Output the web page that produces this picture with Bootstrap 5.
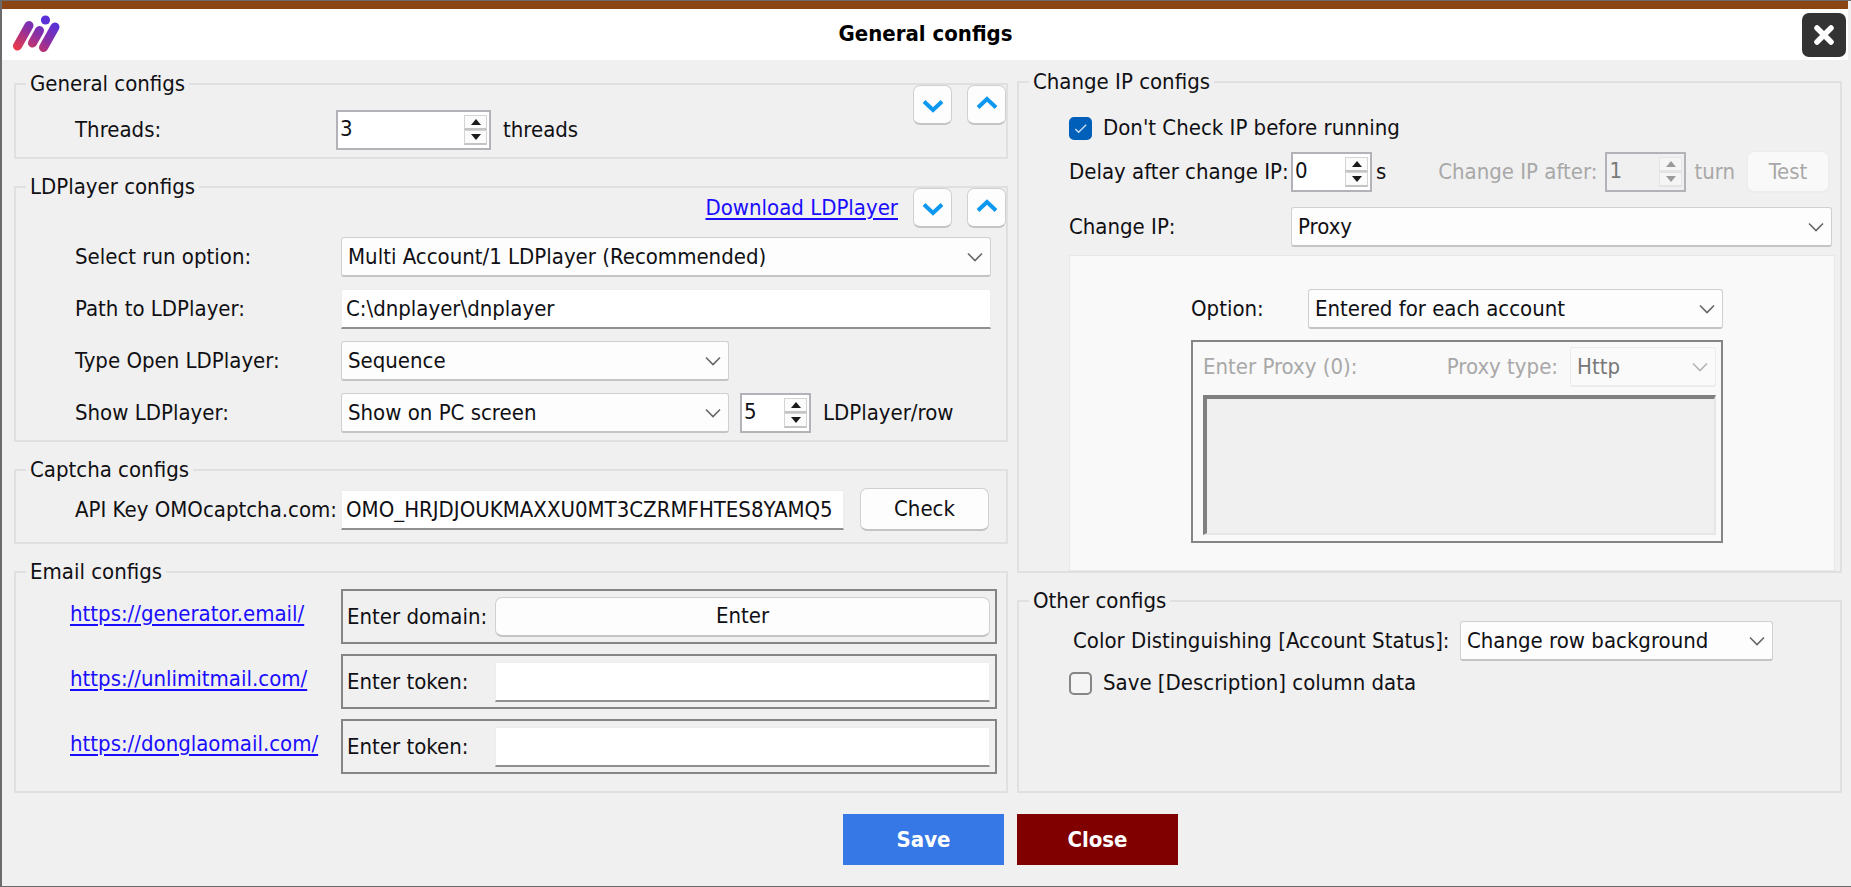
<!DOCTYPE html>
<html lang="en">
<head>
<meta charset="utf-8">
<meta name="viewport" content="width=device-width, initial-scale=1">
<title>General configs</title>
<link href="https://cdn.jsdelivr.net/npm/bootstrap@5.3.0/dist/css/bootstrap.min.css" rel="stylesheet">
<style>
  body {
    background: #f0f0f0;
    color: #101014;
    font-family: "DejaVu Sans Condensed", "DejaVu Sans", sans-serif;
    font-size: 22px;
    line-height: 26px;
  }
  .window-frame { border: solid #6b6b6b; border-width: 1px 0 1px 2px; min-height: 100vh; padding-right: 3px; }
  .title-bar { border-top: 8px solid #8b4513; background: #fff; height: 59px; padding: 0 2px 0 10px; }
  .title-bar h1 { font-size: 22px; line-height: 26px; color: #000; padding-bottom: 2px; }
  .title-logo { width: 60px; }
  .title-close { width: 67px; }
  .close-btn { width: 44px; height: 44px; background: #333; border: 0; border-radius: 7px; }
  .config-grid { display: grid; grid-template-columns: 994fr 825fr; column-gap: 9px; padding: 9px 6px 0 12px; }
  .col-stack { gap: 15px; }
  .col-left { padding-top: 2px; }
  fieldset.group { border: 2px solid #e0e0e0; padding: 0 11px 7px 59px; }
  .group > legend { float: none; width: auto; margin: 0 0 0 -49px; padding: 0 4px; font-size: 22px; line-height: 26px; }
  fieldset.group-right { padding-left: 50px; }
  .group-right > legend { margin-left: -40px; }
  .group a, .group a:hover { color: #1a0dff; text-decoration: underline; text-decoration-thickness: 2px; text-underline-offset: 3px; }
  .head-row { gap: 15px; margin: -12px -11px 0 0; }
  .ld-head { margin-bottom: 9px; }
  .threads-row { padding-top: 13px; }
  .sq-btn { width: 39px; height: 40px; }
  .face { background: #fdfdfd; border: 1px solid #d0d0d0; border-bottom: 2px solid #c4c4c4; border-radius: 7px; color: #101014; padding: 0; }
  .face:hover { background: #f4f8fc; }
  .face:disabled { border-color: #ececec; background: #f9f9f9; color: #a8a8a8; opacity: 1; }
  .form-lines { display: grid; grid-template-columns: 266px 1fr; row-gap: 12px; align-items: center; }
  .pick {
    height: 40px; padding: 0 36px 0 6px; font-size: 22px; line-height: 26px; color: #101014;
    background: #fdfdfd url("data:image/svg+xml,%3Csvg xmlns='http://www.w3.org/2000/svg' viewBox='0 0 16 10'%3E%3Cpath d='M1 1.5l7 7 7-7' fill='none' stroke='%23666' stroke-width='1.6'/%3E%3C/svg%3E") no-repeat right 7px center / 16px 10px;
    border: 1px solid #d0d0d0; border-bottom: 2px solid #c4c4c4; border-radius: 3px;
  }
  .pick:disabled { background-color: #fafafa; border-color: #ebebeb; color: #777; opacity: 1;
    background-image: url("data:image/svg+xml,%3Csvg xmlns='http://www.w3.org/2000/svg' viewBox='0 0 16 10'%3E%3Cpath d='M1 1.5l7 7 7-7' fill='none' stroke='%23b5b5b5' stroke-width='1.6'/%3E%3C/svg%3E"); }
  .pick-mid { width: 388px; }
  .line-input { height: 40px; padding: 0 4px; font-size: 22px; line-height: 26px; color: #101014; border: 1px solid #ededed; border-bottom: 2px solid #909090; border-radius: 0; background: #fff; }
  .spin { height: 40px; border: 2px solid #b2b2b8; background: #fff; padding: 2px; }
  .spin input { min-width: 0; border: 0; padding: 0 0 2px; background: transparent; color: #101014; appearance: textfield; -moz-appearance: textfield; }
  .spin input::-webkit-inner-spin-button { appearance: none; }
  .spin button { width: 23px; height: 15px; padding: 0; border: 1px solid #d4d4d4; border-bottom: 2px solid #c4c4c4; background: #fbfbfb; display: flex; align-items: center; justify-content: center; }
  .spin svg { fill: #1a1a1a; }
  .spin.off { background: #f0f0f0; }
  .spin.off input { color: #777; }
  .spin.off button { border-color: #e4e4e4; background: #f5f5f5; }
  .spin.off svg { fill: #9a9a9a; }
  .spin-wide { width: 155px; }
  .spin-mid { width: 81px; }
  .spin-small { width: 71px; margin-left: 11px; }
  .dim { color: #a8a8a8; }
  .framed { border: 2px solid #858585; }
  .key-row { padding: 5px 6px 4px 0; }
  .key-row label { width: 266px; }
  .check-btn { width: 129px; height: 43px; }
  .mail-row { height: 55px; padding: 0 5px 0 4px; }
  .mail-grid { display: grid; grid-template-columns: 271px 1fr; row-gap: 10px; align-items: center; margin: 4px -2px 10px -5px; }
  .mail-grid > a { padding-bottom: 5px; }
  .mail-label { width: 148px; }
  .enter-btn { height: 40px; }
  .tick { width: 23px; height: 23px; margin: 0; border: 2px solid #868686; border-radius: 5px !important; background-color: #f5f5f5; }
  .tick + label { margin-left: 11px; }
  .tick:checked { background-color: #005fb8; border-color: #005fb8; background-image: url("data:image/svg+xml,%3Csvg xmlns='http://www.w3.org/2000/svg' viewBox='0 0 20 20'%3E%3Cpath d='M4.500 10.500l3.500 3.500 8-8' fill='none' stroke='%23c8dcf0' stroke-width='1.500'/%3E%3C/svg%3E"); }
  .ip-label { width: 222px; }
  .delay-row { margin-top: 10px; }
  .test-btn { width: 82px; height: 42px; margin-left: 12px; }
  .change-row { margin: 14px -3px 0 0; }
  .proxy-panel { background: #f9f9f9; border: 1px solid #e8e8e8; margin: 8px -6px -7px 0; padding: 33px 111px 27px 121px; }
  .option-label { width: 117px; }
  .proxy-box { margin-top: 11px; padding: 5px 5px 6px 10px; }
  .proxy-type { width: 146px; margin-left: 12px; }
  .proxy-text { height: 140px; resize: none; background: #f0f0f0; border: solid; border-width: 4px 2px 2px 4px; border-color: #808080 #e6e6e6 #e6e6e6 #808080; border-radius: 0; }
  .color-row { margin-top: 7px; }
  .color-label { width: 387px; }
  .color-pick { width: 313px; }
  .save-row { margin-top: 9px; }
  .actions { gap: 13px; margin-top: 21px; padding-left: 171px; }
  .action { width: 161px; height: 51px; border: 0; border-radius: 0; color: #fff; font-size: 22px; font-weight: bold; }
  .action-save { background: #3678e6; }
  .action-close { background: #800000; }
</style>
</head>
<body>
<div class="window-frame">
  <header class="title-bar d-flex align-items-center">
    <div class="title-logo">
      <svg width="50" height="40" viewBox="0 0 50 40" class="d-block" role="img" aria-label="Logo">
        <defs>
          <linearGradient id="lg" gradientUnits="userSpaceOnUse" x1="12" y1="40" x2="34" y2="4">
            <stop offset="0" stop-color="#ef3a45"/><stop offset=".55" stop-color="#8e2fa0"/><stop offset="1" stop-color="#5a31d6"/>
          </linearGradient>
        </defs>
        <g stroke="url(#lg)" stroke-width="9" stroke-linecap="round">
          <path d="M5.500 31L17 10.500"/><path d="M20.500 28L27.500 15.500"/><path d="M31.500 32.500L43 12"/>
        </g>
        <circle cx="33.500" cy="5" r="4.600" fill="#5a31d6"/>
      </svg>
    </div>
    <h1 class="flex-grow-1 text-center fw-bold m-0">General configs</h1>
    <div class="title-close d-flex justify-content-end">
      <button type="button" class="close-btn d-flex align-items-center justify-content-center p-0" aria-label="Close window">
        <svg width="22" height="22" viewBox="0 0 22 22"><path d="M4 4l14 14M18 4L4 18" stroke="#fff" stroke-width="5.500" stroke-linecap="round"/></svg>
      </button>
    </div>
  </header>

  <main>
    <form>
      <div class="config-grid">
        <div class="col-stack col-left d-flex flex-column">
          <fieldset class="group">
            <legend>General configs</legend>
            <div class="d-flex align-items-start">
              <div class="threads-row d-flex align-items-center">
                <label for="threads" style="width:261px">Threads:</label>
                <div class="spin spin-wide d-flex align-items-center">
                  <input type="number" id="threads" class="flex-grow-1 w-100" value="3">
                  <div><button type="button" aria-label="More threads"><svg width="10" height="6"><path d="M0 6L5 0l5 6z"/></svg></button><button type="button" aria-label="Fewer threads"><svg width="10" height="6"><path d="M0 0h10L5 6z"/></svg></button></div>
                </div>
                <span class="ms-2 ps-1">threads</span>
              </div>
              <div class="head-row d-flex ms-auto">
                <button type="button" class="face sq-btn" aria-label="Move down"><svg width="22" height="14" viewBox="0 0 22 14"><path d="M2 2.500l9 8.500 9-8.500" fill="none" stroke="#0c98ee" stroke-width="4"/></svg></button>
                <button type="button" class="face sq-btn" aria-label="Move up"><svg width="22" height="20" viewBox="0 0 22 20"><path d="M2 11.500L11 3l9 8.500" fill="none" stroke="#0c98ee" stroke-width="4"/></svg></button>
              </div>
            </div>
          </fieldset>

          <fieldset class="group">
            <legend>LDPlayer configs</legend>
            <div class="head-row ld-head d-flex justify-content-end align-items-center">
              <a href="#ldplayer">Download LDPlayer</a>
              <button type="button" class="face sq-btn" aria-label="Move down"><svg width="22" height="14" viewBox="0 0 22 14"><path d="M2 2.500l9 8.500 9-8.500" fill="none" stroke="#0c98ee" stroke-width="4"/></svg></button>
              <button type="button" class="face sq-btn" aria-label="Move up"><svg width="22" height="20" viewBox="0 0 22 20"><path d="M2 11.500L11 3l9 8.500" fill="none" stroke="#0c98ee" stroke-width="4"/></svg></button>
            </div>
            <div class="form-lines pe-1">
              <label for="runopt">Select run option:</label>
              <select id="runopt" class="form-select pick"><option>Multi Account/1 LDPlayer (Recommended)</option></select>
              <label for="path">Path to LDPlayer:</label>
              <input type="text" id="path" class="form-control line-input" value="C:\dnplayer\dnplayer">
              <label for="opentype">Type Open LDPlayer:</label>
              <select id="opentype" class="form-select pick pick-mid"><option>Sequence</option></select>
              <label for="show">Show LDPlayer:</label>
              <div class="d-flex align-items-center">
                <select id="show" class="form-select pick pick-mid"><option>Show on PC screen</option></select>
                <div class="spin spin-small d-flex align-items-center">
                  <input type="number" id="perrow" class="flex-grow-1 w-100" value="5">
                  <div><button type="button" aria-label="More per row"><svg width="10" height="6"><path d="M0 6L5 0l5 6z"/></svg></button><button type="button" aria-label="Fewer per row"><svg width="10" height="6"><path d="M0 0h10L5 6z"/></svg></button></div>
                </div>
                <label for="perrow" class="ms-2 ps-1">LDPlayer/row</label>
              </div>
            </div>
          </fieldset>

          <fieldset class="group">
            <legend>Captcha configs</legend>
            <div class="key-row d-flex align-items-center">
              <label for="apikey" class="text-nowrap">API Key OMOcaptcha.com:</label>
              <input type="text" id="apikey" class="form-control line-input flex-grow-1 w-auto" value="OMO_HRJDJOUKMAXXU0MT3CZRMFHTES8YAMQ5">
              <button type="button" class="face check-btn ms-3">Check</button>
            </div>
          </fieldset>

          <fieldset class="group">
            <legend>Email configs</legend>
            <div class="mail-grid">
              <a href="#generator">https://generator.email/</a>
              <div class="framed mail-row d-flex align-items-center">
                <span class="mail-label">Enter domain:</span>
                <button type="button" class="face enter-btn flex-grow-1">Enter</button>
              </div>
              <a href="#unlimitmail">https://unlimitmail.com/</a>
              <div class="framed mail-row d-flex align-items-center">
                <label for="token1" class="mail-label">Enter token:</label>
                <input type="text" id="token1" class="form-control line-input flex-grow-1 w-auto">
              </div>
              <a href="#donglaomail">https://donglaomail.com/</a>
              <div class="framed mail-row d-flex align-items-center">
                <label for="token2" class="mail-label">Enter token:</label>
                <input type="text" id="token2" class="form-control line-input flex-grow-1 w-auto">
              </div>
            </div>
          </fieldset>
        </div>

        <div class="col-stack d-flex flex-column">
          <fieldset class="group group-right">
            <legend>Change IP configs</legend>
            <div class="d-flex align-items-center mt-3 pt-1">
              <input type="checkbox" id="nocheck" class="form-check-input tick" checked>
              <label for="nocheck">Don't Check IP before running</label>
            </div>
            <div class="delay-row d-flex align-items-center">
              <label for="delay" class="ip-label text-nowrap">Delay after change IP:</label>
              <div class="spin spin-mid d-flex align-items-center">
                <input type="number" id="delay" class="flex-grow-1 w-100" value="0">
                <div><button type="button" aria-label="Longer delay"><svg width="10" height="6"><path d="M0 6L5 0l5 6z"/></svg></button><button type="button" aria-label="Shorter delay"><svg width="10" height="6"><path d="M0 0h10L5 6z"/></svg></button></div>
              </div>
              <span class="ms-1">s</span>
              <label for="after" class="dim text-nowrap ms-auto">Change IP after:</label>
              <div class="spin spin-mid off d-flex align-items-center ms-2">
                <input type="number" id="after" class="flex-grow-1 w-100" value="1" disabled>
                <div><button type="button" aria-label="More turns" disabled><svg width="10" height="6"><path d="M0 6L5 0l5 6z"/></svg></button><button type="button" aria-label="Fewer turns" disabled><svg width="10" height="6"><path d="M0 0h10L5 6z"/></svg></button></div>
              </div>
              <span class="dim ms-2">turn</span>
              <button type="button" class="face test-btn" disabled>Test</button>
            </div>
            <div class="change-row d-flex align-items-center">
              <label for="changeip" class="ip-label">Change IP:</label>
              <select id="changeip" class="form-select pick flex-grow-1 w-auto"><option>Proxy</option></select>
            </div>
            <div class="proxy-panel">
              <div class="d-flex align-items-center">
                <label for="option" class="option-label">Option:</label>
                <select id="option" class="form-select pick flex-grow-1 w-auto"><option>Entered for each account</option></select>
              </div>
              <div class="framed proxy-box">
                <div class="d-flex align-items-center">
                  <label for="proxies" class="dim">Enter Proxy (0):</label>
                  <label for="proxytype" class="dim ms-auto">Proxy type:</label>
                  <select id="proxytype" class="form-select pick proxy-type" disabled><option>Http</option></select>
                </div>
                <textarea id="proxies" class="proxy-text d-block w-100 mt-2" disabled></textarea>
              </div>
            </div>
          </fieldset>

          <fieldset class="group group-right flex-grow-1">
            <legend>Other configs</legend>
            <div class="color-row d-flex align-items-center ps-1">
              <label for="rowcolor" class="color-label text-nowrap">Color Distinguishing [Account Status]:</label>
              <select id="rowcolor" class="form-select pick color-pick"><option>Change row background</option></select>
            </div>
            <div class="save-row d-flex align-items-center">
              <input type="checkbox" id="savedesc" class="form-check-input tick">
              <label for="savedesc">Save [Description] column data</label>
            </div>
          </fieldset>
        </div>
      </div>

      <div class="actions d-flex justify-content-center">
        <button type="button" class="action action-save">Save</button>
        <button type="button" class="action action-close">Close</button>
      </div>
    </form>
  </main>
</div>
<script src="https://cdn.jsdelivr.net/npm/bootstrap@5.3.0/dist/js/bootstrap.bundle.min.js"></script>
</body>
</html>
